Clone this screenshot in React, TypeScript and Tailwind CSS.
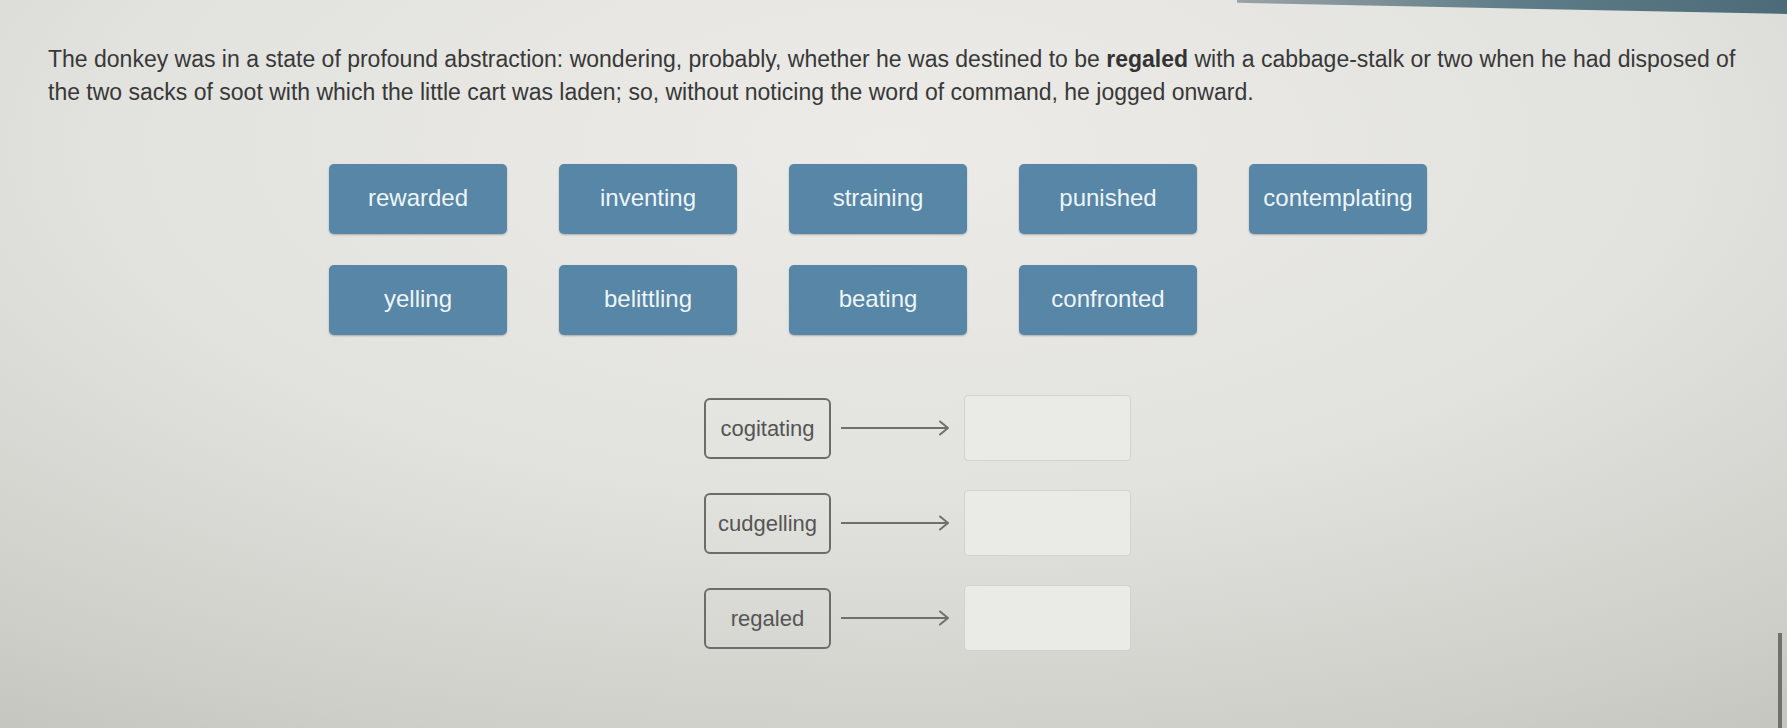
import React from "react";

const wordBank: string[][] = [
  ["rewarded", "inventing", "straining", "punished", "contemplating"],
  ["yelling", "belittling", "beating", "confronted"],
];

const pairs = ["cogitating", "cudgelling", "regaled"];

function Arrow() {
  return (
    <svg width="112" height="18" viewBox="0 0 112 18" className="shrink-0">
      <line x1="1" y1="9" x2="108" y2="9" stroke="#6f6f6d" strokeWidth="1.8" />
      <polyline
        points="100,2.5 108,9 100,15.5"
        fill="none"
        stroke="#6f6f6d"
        strokeWidth="2"
        strokeLinecap="round"
        strokeLinejoin="round"
      />
    </svg>
  );
}

export default function App() {
  return (
    <div
      className="relative h-[728px] w-full overflow-hidden bg-[radial-gradient(ellipse_110%_120%_at_50%_20%,#ecebe8_0%,#e2e2de_40%,#cfcfca_70%,#b4b5ae_100%)] text-[#383838]"
      style={{ fontFamily: '"Liberation Sans", Arial, sans-serif' }}
    >
      {/* thin header strip along the top edge */}
      <div className="absolute right-0 top-0 h-[14px] w-[550px] bg-gradient-to-r from-[#9aa3a6] via-[#5f7d88] to-[#4c6a78] [clip-path:polygon(0_0,100%_0,100%_100%,0_20%)]" />
      <div className="absolute bottom-0 right-[5px] h-[95px] w-[4px] bg-[#6f716c]" />

      <p className="pl-[48px] pt-[43px] text-[23px] leading-[33px] whitespace-nowrap">
        The donkey was in a state of profound abstraction: wondering, probably, whether he was destined to be{" "}
        <b className="font-bold text-[#333]">regaled</b> with a cabbage-stalk or two when he had disposed of
        <br />
        the two sacks of soot with which the little cart was laden; so, without noticing the word of command, he
        jogged onward.
      </p>

      <div className="mt-[55px] flex flex-col gap-[31px] pl-[329px]">
        {wordBank.map((row, i) => (
          <div key={i} className="flex gap-[52px]">
            {row.map((w) => (
              <div
                key={w}
                className="flex h-[70px] w-[178px] items-center justify-center rounded-[5px] bg-[#5786a6] pb-[3px] text-[24px] text-[#eef5f8] shadow-[0_1px_2px_rgba(0,0,0,0.25)]"
              >
                {w}
              </div>
            ))}
          </div>
        ))}
      </div>

      <div className="mt-[60px] flex flex-col gap-[29px] pl-[704px]">
        {pairs.map((w) => (
          <div key={w} className="flex h-[66px] items-center">
            <div className="flex h-[61px] w-[127px] items-center justify-center rounded-[6px] border-2 border-[#6c6c6a] text-[22px] text-[#555]">
              {w}
            </div>
            <div className="ml-[9px] mr-[12px]">
              <Arrow />
            </div>
            <div className="h-[66px] w-[167px] rounded-[4px] border border-[#d2d2ce] bg-[#eaeae7]" />
          </div>
        ))}
      </div>
    </div>
  );
}
